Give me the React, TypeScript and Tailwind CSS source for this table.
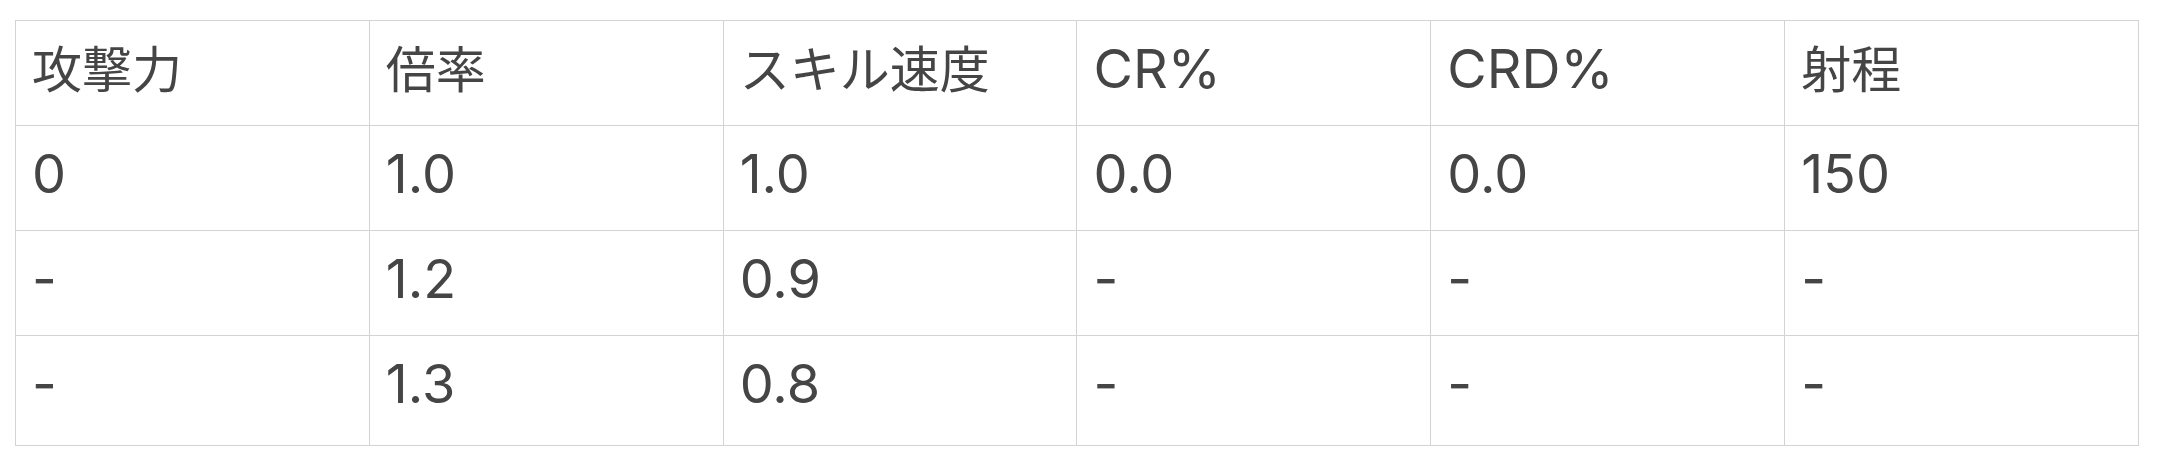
const headers = ["攻撃力", "倍率", "スキル速度", "CR%", "CRD%", "射程"]

const rows = [
  ["0", "1.0", "1.0", "0.0", "0.0", "150"],
  ["-", "1.2", "0.9", "-", "-", "-"],
  ["-", "1.3", "0.8", "-", "-", "-"],
]

const isCjk = (s: string) => /[\u3040-\u30ff\u4e00-\u9fff]/.test(s)

export default function App() {
  return (
    <div className="min-h-screen bg-white pl-[15px] pt-[20px]">
      <table
        className="w-[2124px] table-fixed border-collapse text-[54px] leading-[66px] text-[#454545]"
        style={{ fontFamily: "Inter, 'Noto Sans CJK JP', sans-serif" }}
      >
        <thead>
          <tr className="h-[105px]">
            {headers.map((h) => (
              <th
                key={h}
                className="border border-[#d3d3d3] pl-[16px] pt-[15px] text-left align-top font-normal"
              >
                {isCjk(h) ? <span className="text-[50px]">{h}</span> : h}
              </th>
            ))}
          </tr>
        </thead>
        <tbody>
          {rows.map((row, i) => (
            <tr key={i} className={i === rows.length - 1 ? "h-[110px]" : "h-[105px]"}>
              {row.map((cell, j) => (
                <td
                  key={j}
                  className="border border-[#d3d3d3] pl-[16px] pt-[15px] align-top"
                >
                  {cell}
                </td>
              ))}
            </tr>
          ))}
        </tbody>
      </table>
    </div>
  )
}
